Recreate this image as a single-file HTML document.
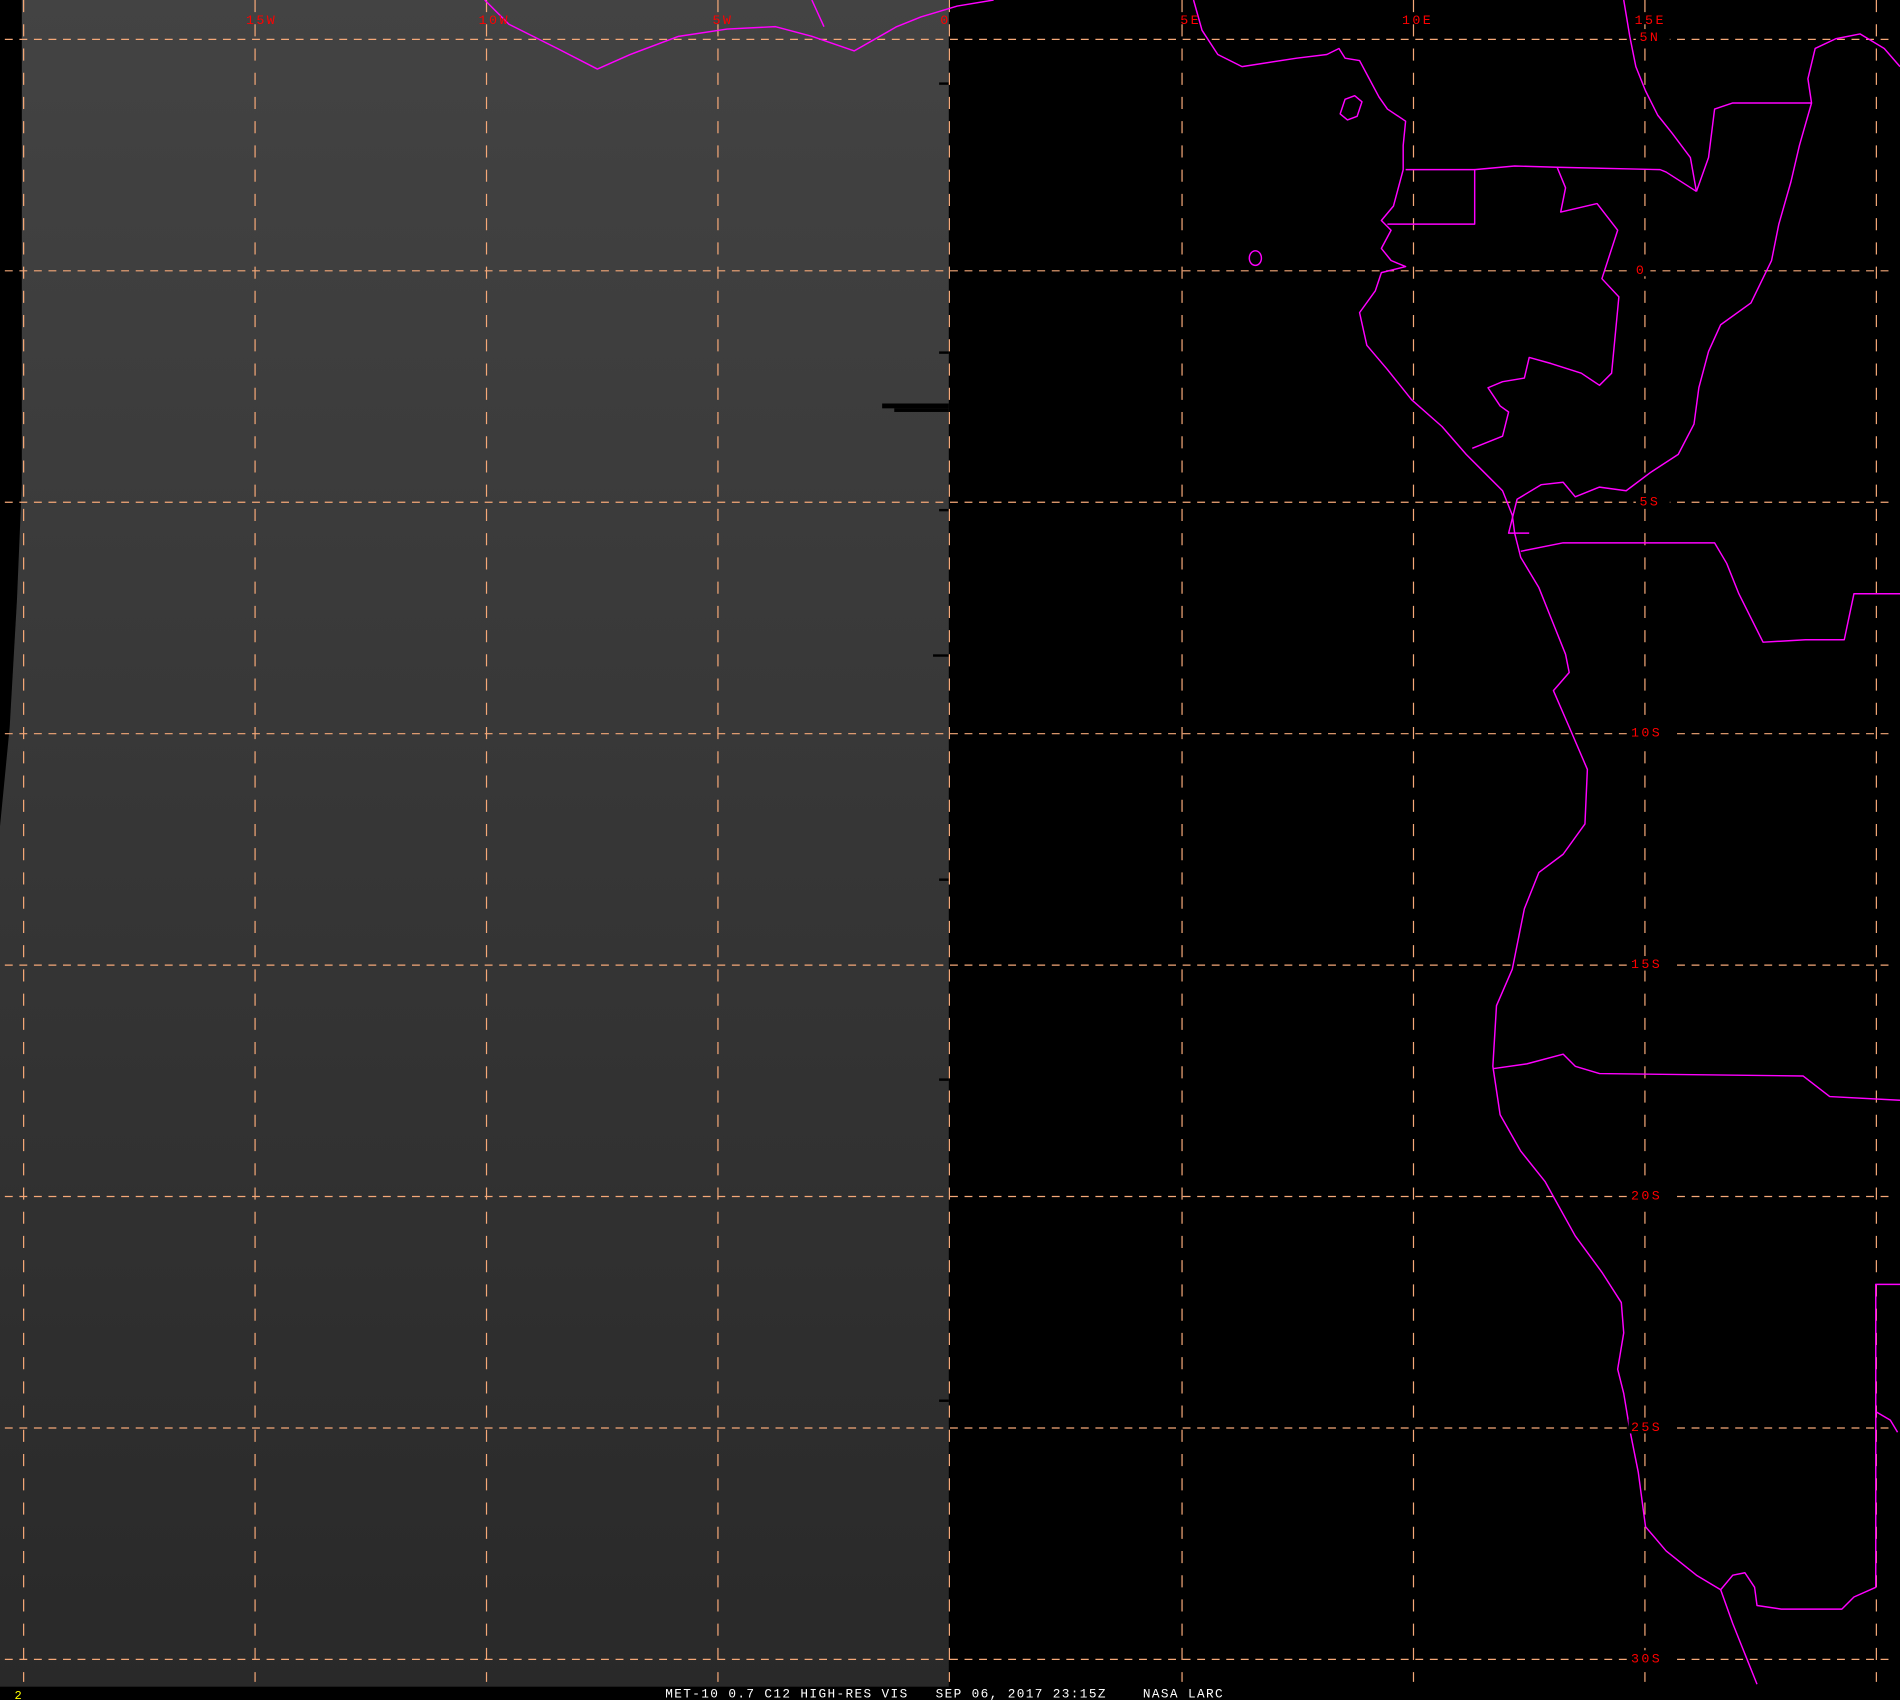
<!DOCTYPE html>
<html><head><meta charset="utf-8"><style>
html,body{margin:0;padding:0;background:#000;width:1900px;height:1700px;overflow:hidden}
svg{display:block}
text{font-family:"Liberation Mono","DejaVu Sans Mono",monospace}
</style></head><body>
<svg width="1900" height="1700" viewBox="0 0 1568 1403" preserveAspectRatio="none" xmlns="http://www.w3.org/2000/svg">
<defs><linearGradient id="g" x1="0" y1="0" x2="0" y2="1"><stop offset="0" stop-color="#434343"/><stop offset="1" stop-color="#292929"/></linearGradient></defs>
<rect width="1568" height="1403" fill="#000"/>
<rect x="0" y="0" width="783" height="1392" fill="url(#g)"/>
<polygon points="0,0 18,0 18,400 14,495 8,600 0,682" fill="#000"/>
<g fill="#000"><rect x="728" y="333" width="55" height="4"/><rect x="738" y="337" width="45" height="3"/><rect x="775" y="68" width="8" height="2"/><rect x="775" y="290" width="8" height="2"/><rect x="775" y="420" width="8" height="2"/><rect x="770" y="540" width="13" height="2"/><rect x="775" y="725" width="8" height="2"/><rect x="775" y="890" width="8" height="2"/><rect x="775" y="1155" width="8" height="2"/></g>
<g stroke="#f5a878" stroke-width="1" fill="none">
<g stroke-dasharray="10,10">
<line x1="19.5" y1="0" x2="19.5" y2="1388"/><line x1="210.5" y1="0" x2="210.5" y2="1388"/><line x1="401.5" y1="0" x2="401.5" y2="1388"/><line x1="592.5" y1="0" x2="592.5" y2="1388"/><line x1="783.5" y1="0" x2="783.5" y2="1388"/><line x1="975.5" y1="0" x2="975.5" y2="1388"/><line x1="1166.5" y1="0" x2="1166.5" y2="1388"/><line x1="1357.5" y1="0" x2="1357.5" y2="1388"/><line x1="1548.5" y1="0" x2="1548.5" y2="1388"/>
</g>
<g stroke-dasharray="6.5,5.5">
<line x1="4" y1="32.5" x2="1562" y2="32.5"/><line x1="4" y1="223.5" x2="1562" y2="223.5"/><line x1="4" y1="414.5" x2="1562" y2="414.5"/><line x1="4" y1="605.5" x2="1562" y2="605.5"/><line x1="4" y1="796.5" x2="1562" y2="796.5"/><line x1="4" y1="987.5" x2="1562" y2="987.5"/><line x1="4" y1="1178.5" x2="1562" y2="1178.5"/><line x1="4" y1="1369.5" x2="1562" y2="1369.5"/>
</g></g>
<g stroke="#ff00ff" stroke-width="1.2" fill="none" stroke-linejoin="round">
<polyline points="400,0 420,20 460,40 493,57 520,45 560,30 600,24 640,22 670,30 705,42 740,22 760,14 790,5 820,0"/>
<polyline points="670,0 680,22"/>
<polyline points="985,0 992,25 1005,45 1025,55 1070,48 1095,45 1105,40 1110,48 1122,50 1130,65 1138,80 1145,90 1160,100 1158,120 1158,140 1150,170 1140,182 1148,190 1140,205 1148,215 1160,220 1140,225 1135,240 1122,258 1128,285 1145,305 1165,330 1190,352 1210,375 1225,390 1240,405 1248,425 1250,440 1255,460 1270,485 1280,510 1292,540 1295,555 1282,570 1295,600 1310,635 1308,680 1290,705 1270,720 1258,750 1248,800 1235,830 1232,880 1238,920 1255,950 1275,975 1300,1020 1322,1050 1338,1075 1340,1100 1335,1130 1340,1150 1345,1180 1352,1215 1358,1260 1375,1280 1400,1300 1420,1312"/>
<polyline points="1420,1312 1430,1300 1440,1298 1448,1310 1450,1325 1470,1328 1520,1328 1530,1318 1548,1310"/>
<polyline points="1420,1312 1430,1340 1440,1365 1450,1390"/>
<polyline points="1548,1310 1548,1060 1568,1060"/>
<polyline points="1548,1165 1560,1172 1566,1182"/>
<polyline points="1160,140 1217,140 1217,185 1145,185"/>
<polyline points="1217,140 1250,137 1285,138 1370,140 1375,142 1400,158"/>
<polyline points="1285,138 1292,155 1288,175 1318,168 1335,190 1322,230 1336,245 1330,308 1320,318 1305,308 1280,300 1262,295 1258,312 1240,315 1228,320 1238,335 1245,340 1240,360 1215,370"/>
<polyline points="1400,158 1410,130 1415,90 1430,85 1495,85 1492,65 1498,40 1515,32 1535,28 1555,40 1568,55"/>
<polyline points="1400,158 1395,130 1380,110 1368,95 1358,75 1350,55 1345,30 1340,0"/>
<polyline points="1495,85 1485,120 1478,150 1468,185 1462,215 1445,250 1420,268 1410,290 1402,320 1398,350 1385,375 1362,390 1342,405 1320,402 1300,410 1290,398 1272,400 1252,412 1245,440 1262,440"/>
<polyline points="1255,455 1290,448 1415,448 1425,465 1435,490 1455,530 1490,528 1522,528 1530,490 1568,490"/>
<polyline points="1232,882 1260,878 1290,870 1300,880 1320,886 1488,888 1510,905 1568,908"/>
<path d="M1110,82 l8,-3 l6,5 l-4,12 l-8,3 l-6,-5 z"/>
<ellipse cx="1036" cy="213" rx="5" ry="6"/>
</g>
<g fill="#ff0000" font-size="11" letter-spacing="2">
<text x="203" y="20">15W</text><text x="395" y="20">10W</text><text x="588" y="20">5W</text><text x="776" y="20">0</text><text x="974" y="20">5E</text><text x="1157" y="20">10E</text><text x="1349" y="20">15E</text>
</g>
<g font-size="11" letter-spacing="2">
<rect x="1350" y="24" width="28" height="12" fill="#000"/><text x="1353" y="34" fill="#ff0000">5N</text>
<rect x="1346" y="216" width="16" height="12" fill="#000"/><text x="1350" y="226" fill="#ff0000">0</text>
<rect x="1350" y="407" width="28" height="12" fill="#000"/><text x="1353" y="417" fill="#ff0000">5S</text>
<rect x="1344" y="598" width="36" height="12" fill="#000"/><text x="1346" y="608" fill="#ff0000">10S</text>
<rect x="1344" y="789" width="36" height="12" fill="#000"/><text x="1346" y="799" fill="#ff0000">15S</text>
<rect x="1344" y="980" width="36" height="12" fill="#000"/><text x="1346" y="990" fill="#ff0000">20S</text>
<rect x="1344" y="1171" width="36" height="12" fill="#000"/><text x="1346" y="1181" fill="#ff0000">25S</text>
<rect x="1344" y="1362" width="36" height="12" fill="#000"/><text x="1346" y="1372" fill="#ff0000">30S</text>
</g>
<text x="12" y="1402" font-size="10" fill="#ffff00">2</text>
<text x="549" y="1401" font-size="10.5" fill="#ffffff" xml:space="preserve" textLength="460" lengthAdjust="spacing">MET-10 0.7 C12 HIGH-RES VIS   SEP 06, 2017 23:15Z    NASA LARC</text>
</svg>
</body></html>
